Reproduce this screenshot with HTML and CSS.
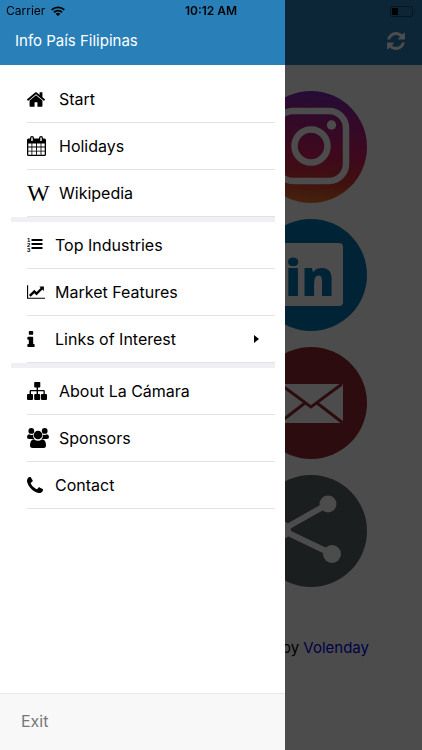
FILE: index.html
```
<!DOCTYPE html>
<html lang="en">
<head>
  <meta charset="UTF-8" />
  <meta name="viewport" content="width=device-width, initial-scale=1.0" />
  <title>Info País Filipinas</title>
  <link rel="stylesheet" href="styles.css">
</head>
<body>
  <div class="page">
    <header class="toolbar">
      <button class="refresh" aria-label="Refresh">
        <svg width="18" height="18" viewBox="128 128 1536 1536"><path d="M1639 1056q0 5-1 7-64 268-268 434.5t-478 166.5q-146 0-282.5-55t-243.5-157l-129 129q-19 19-45 19t-45-19-19-45v-448q0-26 19-45t45-19h448q26 0 45 19t19 45-19 45l-137 137q71 66 161 102t187 36q134 0 250-65t186-179q11-17 53-117 8-23 30-23h192q13 0 22.5 9.5t9.5 22.5zm25-800v448q0 26-19 45t-45 19h-448q-26 0-45-19t-19-45 19-45l138-138q-148-137-349-137-134 0-250 65t-186 179q-11 17-53 117-8 23-30 23h-199q-13 0-22.5-9.5t-9.5-22.5v-7q65-268 270-434.5t480-166.5q146 0 284 55.5t245 156.5l130-129q19-19 45-19t45 19 19 45z"/></svg>
      </button>
    </header>
    <main class="social">
      <a href="#" aria-label="Instagram">
        <svg width="112" height="112" viewBox="0 0 112 112">
          <defs>
            <linearGradient id="insta" x1="0.55" y1="0" x2="0.45" y2="1">
              <stop offset="0" stop-color="#7a2bb5"/>
              <stop offset="0.25" stop-color="#a8208a"/>
              <stop offset="0.55" stop-color="#cf1f63"/>
              <stop offset="0.8" stop-color="#d63a35"/>
              <stop offset="1" stop-color="#e8782a"/>
            </linearGradient>
          </defs>
          <circle cx="56" cy="56" r="56" fill="url(#insta)"/>
          <rect x="21" y="20" width="70" height="70" rx="17" fill="none" stroke="#fff" stroke-width="6.5"/>
          <circle cx="56" cy="55" r="16.5" fill="none" stroke="#fff" stroke-width="6.5"/>
          <circle cx="76.5" cy="34" r="4.7" fill="#fff"/>
        </svg>
      </a>
      <a href="#" aria-label="LinkedIn">
        <svg width="112" height="112" viewBox="0 0 112 112">
          <circle cx="56" cy="56" r="56" fill="#0077b5"/>
          <rect x="24" y="24" width="64" height="63" rx="4" fill="#fff"/>
          <text class="in" x="30" y="77">in</text>
        </svg>
      </a>
      <a href="#" aria-label="E-mail">
        <svg width="112" height="112" viewBox="0 0 112 112">
          <circle cx="56" cy="56" r="56" fill="#952b35"/>
          <rect x="24" y="37" width="64" height="39" fill="#fff"/>
          <path d="M25 37l31 23 31-23M24 76l26-20M88 76L62 56" fill="none" stroke="#952b35" stroke-width="3"/>
        </svg>
      </a>
      <a href="#" aria-label="Share">
        <svg width="112" height="112" viewBox="0 0 112 112">
          <circle cx="56" cy="56" r="56" fill="#57646a"/>
          <path d="M73 29L27 55l50 24" fill="none" stroke="#fff" stroke-width="6"/>
          <circle cx="73" cy="29" r="8.5" fill="#fff"/>
          <circle cx="77" cy="79" r="9" fill="#fff"/>
          <circle cx="27" cy="55" r="9" fill="#fff"/>
        </svg>
      </a>
    </main>
    <p class="credit">by <a href="#">Volenday</a></p>
  </div>

  <div class="overlay"></div>

  <aside class="drawer">
    <h1 class="drawer-title">Info País Filipinas</h1>
    <nav class="menu">
      <ul class="group wide">
        <li><a href="#">
          <span class="icon"><svg width="18" height="15" viewBox="90 250 1612 1290"><path d="M1472 992v480q0 26-19 45t-45 19h-384v-384h-256v384h-384q-26 0-45-19t-19-45v-480q0-1 .5-3t.5-3l575-474 575 474q1 2 1 6zm223-69l-62 74q-8 9-21 11h-3q-13 0-21-7l-692-577-692 577q-12 8-24 7-13-2-21-11l-62-74q-8-10-7-23.5t11-21.5l719-599q32-26 76-26t76 26l244 204v-195q0-14 9-23t23-9h192q14 0 23 9t9 23v408l219 182q10 8 11 21.5t-7 23.5z"/></svg></span>
          Start</a></li>
        <li><a href="#">
          <span class="icon"><svg width="19" height="20" viewBox="0 0 19 20">
            <path fill-rule="evenodd" d="M1.5 2.5H3V2a2 2 0 0 1 4 0v.5h5V2a2 2 0 0 1 4 0v.5h1.500a1.500 1.500 0 0 1 1.500 1.500v14.500a1.500 1.500 0 0 1-1.500 1.500h-16A1.500 1.500 0 0 1 0 18.500V4a1.500 1.500 0 0 1 1.500-1.500zM4.300 1.500v3.500h1.400V1.500zM13.300 1.500v3.500h1.400V1.500zM1.300 7.500v3h3.200v-3zM5.300 7.500v3h3.700v-3zM9.900 7.500v3h3.700v-3zM14.400 7.500v3h3.300v-3zM1.300 11.400v3.300h3.200v-3.300zM5.300 11.400v3.300h3.700v-3.300zM9.900 11.400v3.300h3.700v-3.300zM14.400 11.400v3.300h3.300v-3.300zM1.300 15.600v3.100h3.200v-3.100zM5.300 15.600v3.100h3.700v-3.100zM9.900 15.600v3.100h3.700v-3.100zM14.400 15.600v3.100h3.300v-3.100z"/>
          </svg></span>
          Holidays</a></li>
        <li><a href="#">
          <span class="icon"><svg width="26" height="30" viewBox="0 0 26 30"><text class="w" x="0" y="23">W</text></svg></span>
          Wikipedia</a></li>
      </ul>
      <ul class="group">
        <li><a href="#">
          <span class="icon"><svg width="16" height="16" viewBox="0 0 16 16">
            <path d="M4.500 2h11v2h-11zM4.500 6h11v2h-11zM4.500 10h11v2h-11z"/>
            <text class="num" x="0" y="5">1</text><text class="num" x="0" y="10">2</text><text class="num" x="0" y="15">3</text>
          </svg></span>
          Top Industries</a></li>
        <li><a href="#">
          <span class="icon"><svg width="18" height="14" viewBox="0 128 2048 1536"><path d="M2048 1536v128h-2048v-1536h128v1408h1920zm-128-1248v435q0 21-19.500 29.500t-35.500-7.500l-121-121-633 633q-10 10-23 10t-23-10l-233-233-416 416-192-192 585-585q10-10 23-10t23 10l233 233 464-464-121-121q-16-16-7.500-35.500t29.500-19.500h435q14 0 23 9t9 23z"/></svg></span>
          Market Features</a></li>
        <li><a href="#">
          <span class="icon"><svg width="8" height="16" viewBox="576 128 640 1408"><path d="M1216 1344v128q0 26-19 45t-45 19h-512q-26 0-45-19t-19-45v-128q0-26 19-45t45-19h64v-384h-64q-26 0-45-19t-19-45v-128q0-26 19-45t45-19h384q26 0 45 19t19 45v576h64q26 0 45 19t19 45zm-128-1152v192q0 26-19 45t-45 19h-256q-26 0-45-19t-19-45v-192q0-26 19-45t45-19h256q26 0 45 19t19 45z"/></svg></span>
          Links of Interest
          <svg class="caret" width="5" height="8" viewBox="0 0 5 8"><path d="M0 0l5 4-5 4z"/></svg></a></li>
      </ul>
      <ul class="group wide">
        <li><a href="#">
          <span class="icon"><svg width="20" height="18" viewBox="0 0 20 18">
            <path d="M8 0h4.500a.8.8 0 0 1 .8.8v4a.8.8 0 0 1-.8.8H11v2.400h5.500a1.300 1.300 0 0 1 1.300 1.300V12H19a1 1 0 0 1 1 1v4a1 1 0 0 1-1 1h-4a1 1 0 0 1-1-1v-4a1 1 0 0 1 1-1h1.500V9.300H11V12h1.200a1 1 0 0 1 1 1v4a1 1 0 0 1-1 1h-4a1 1 0 0 1-1-1v-4a1 1 0 0 1 1-1h1.400V9.300H4V12h1a1 1 0 0 1 1 1v4a1 1 0 0 1-1 1H1a1 1 0 0 1-1-1v-4a1 1 0 0 1 1-1h1.600V9.300A1.300 1.300 0 0 1 3.900 8h5.700V5.600H8a.8.8 0 0 1-.8-.8v-4A.8.8 0 0 1 8 0z"/>
          </svg></span>
          About La Cámara</a></li>
        <li><a href="#">
          <span class="icon"><svg width="22" height="20" viewBox="0 0 22 20">
            <circle cx="4.300" cy="2.900" r="2.900"/><circle cx="17.700" cy="2.900" r="2.900"/><circle cx="11" cy="7" r="4.300"/>
            <path d="M2 6.300q2.300 1.400 4.200.1Q5.700 9 7.300 11H2.200Q0 11 0 9t2-2.700zM20 6.300q-2.300 1.400-4.200.1.500 2.600-1.100 4.600h5.100Q22 11 22 9t-2-2.700zM7 11.200q4 3 8 0 4 .3 4 6.300 0 2.500-2.700 2.500H5.700Q3 20 3 17.500q0-6 4-6.300z"/>
          </svg></span>
          Sponsors</a></li>
        <li><a href="#">
          <span class="icon short"><svg width="16" height="16" viewBox="192 128 1408 1408"><path d="M1600 1240q0 27-10 70.500t-21 68.500q-21 50-122 106-94 51-186 51-27 0-53-3.500t-57.500-12.500-47-14.500-55.500-20.500-49-18q-98-35-175-83-127-79-264-216t-216-264q-48-77-83-175-3-9-18-49t-20.500-55.500-14.500-47-12.500-57.500-3.500-53q0-92 51-186 56-101 106-122 25-11 68.500-21t70.500-10q14 0 21 3 18 6 53 76 11 19 30 54t35 63.500 31 53.500q3 4 17.500 25t21.500 35.500 7 28.500q0 20-28.500 50t-62 55-62 53-28.500 46q0 9 5 22.500t8.500 20.500 14 24 11.500 19q76 137 174 235t235 174q2 1 19 11.500t24 14 20.500 8.500 22.500 5q18 0 46-28.500t53-62 55-62 50-28.500q14 0 28.500 7t35.500 21.500 25 17.500q25 15 53.500 31t63.500 35 54 30q70 35 76 53 3 7 3 21z"/></svg></span>
          Contact</a></li>
      </ul>
    </nav>
    <div class="drawer-footer"><button class="exit">Exit</button></div>
  </aside>

  <div class="statusbar">
    <span class="carrier">Carrier
      <svg width="14" height="10" viewBox="0 0 14 10"><path d="M0 3.200a10.200 10.200 0 0 1 14 0l-1.300 1.400a8.300 8.300 0 0 0-11.400 0zM2.300 5.500a7 7 0 0 1 9.400 0l-1.400 1.400a5 5 0 0 0-6.600 0zM4.600 7.800a3.600 3.600 0 0 1 4.800 0L7 10z"/></svg>
    </span>
    <span class="time">10:12 AM</span>
    <span class="battery">
      <svg width="26" height="11" viewBox="0 0 26 11"><rect x="0.500" y="0.500" width="22" height="10" rx="2" fill="none" stroke="#000" stroke-opacity="0.400"/><rect x="2" y="2" width="6" height="7"/><path d="M24 3.500q2 2 0 4z" fill-opacity="0.400"/></svg>
    </span>
  </div>
</body>
</html>
```

FILE: styles.css
```
* {
  box-sizing: border-box;
  margin: 0;
  padding: 0;
}

body {
  min-height: 100vh;
  background: #fff;
  color: #000;
  font-family: Inter, Roboto, sans-serif;
  font-size: 16px;
  line-height: 20px;
}

svg {
  display: block;
}

button {
  border: none;
  background: none;
  font: inherit;
  cursor: pointer;
}

/* main page */
.toolbar {
  display: flex;
  justify-content: flex-end;
  align-items: flex-end;
  height: 65px;
  padding: 0 17px 15px;
  background: #2980b9;
}

.refresh svg {
  fill: #fff;
}

.social {
  display: grid;
  gap: 16px;
  justify-items: center;
  width: 50%;
  margin-left: auto;
  padding: 26px 11px 0 0;
}

.in {
  font: 800 50px "Open Sans", sans-serif;
  fill: #0077b5;
}

.credit {
  padding: 51px 53px 0 0;
  font-size: 15px;
  text-align: right;
}

.credit a {
  color: #00e;
  text-decoration: none;
}

.overlay {
  position: fixed;
  inset: 0;
  background: rgba(0, 0, 0, 0.7);
}

/* side menu */
.drawer {
  position: fixed;
  top: 0;
  bottom: 0;
  left: 0;
  display: flex;
  flex-direction: column;
  width: 285px;
  background: #fff;
}

.drawer-title {
  padding: 31px 15px 14px;
  background: #2980b9;
  color: #fff;
  font-size: 15px;
  font-weight: 400;
}

.menu {
  flex: 1;
  padding: 11px 10px 0 11px;
}

.group {
  list-style: none;
}

.group + .group {
  border-top: 5px solid #efeff4;
}

.group li {
  margin-left: 16px;
  border-bottom: 1px solid #e2e2e4;
}

.group a {
  display: flex;
  align-items: center;
  height: 46px;
  color: #000;
  text-decoration: none;
}

.icon {
  width: 28px;
}

.wide .icon {
  width: 32px;
}

.wide .short {
  width: 28px;
}

.w {
  font: 24px "Liberation Serif", serif;
}

.num {
  font: bold 6px "Liberation Sans", sans-serif;
}

.caret {
  margin-left: auto;
  margin-right: 16px;
}

.drawer-footer {
  padding: 17px 21px 19px;
  border-top: 1px solid #e7e7e7;
  background: #f8f8f8;
}

.exit {
  color: #777;
}

/* phone status bar */
.statusbar {
  position: fixed;
  top: 0;
  left: 0;
  right: 0;
  display: grid;
  grid-template-columns: 1fr auto 1fr;
  align-items: center;
  height: 22px;
  padding: 0 6px;
  font-size: 12px;
}

.carrier {
  display: flex;
  align-items: center;
  gap: 6px;
}

.time {
  font-weight: 600;
}

.battery {
  justify-self: end;
}
```
